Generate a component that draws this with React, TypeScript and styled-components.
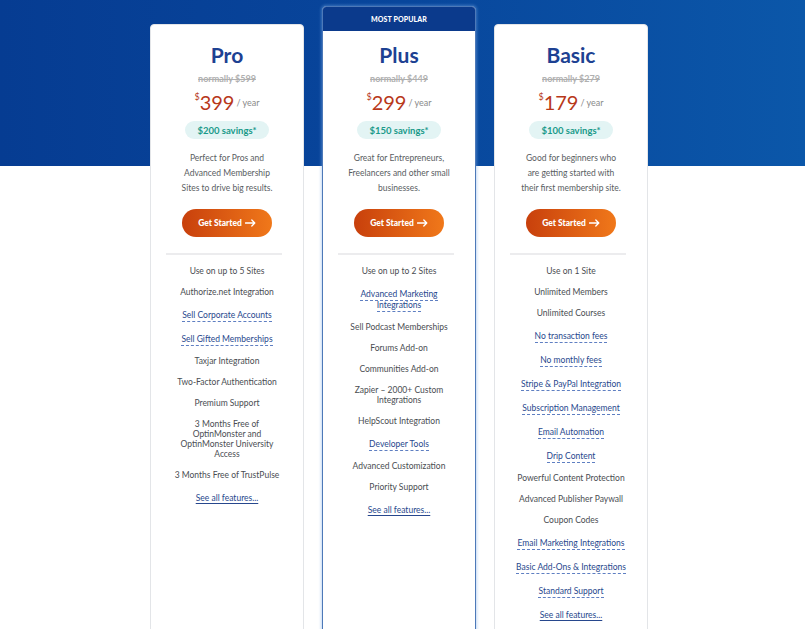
import React from "react";
import styled, { createGlobalStyle } from "styled-components";

const Global = createGlobalStyle`
  html, body { margin: 0; padding: 0; background: #ffffff; }
  body { font-family: Lato, "Noto Sans", "DejaVu Sans", sans-serif; }
  * { box-sizing: border-box; }
`;

const Page = styled.div`
  width: 805px;
  height: 629px;
  overflow: hidden;
  background: linear-gradient(90deg, #063c92 0%, #08469c 50%, #0b57a9 100%) top / 100% 166px no-repeat, #ffffff;
  padding: 6px 0 0 150px;
`;

const Row = styled.div`
  display: flex;
  align-items: stretch;
  gap: 18px;
`;

const Card = styled.div<{ $featured?: boolean }>`
  width: 154px;
  margin-top: ${(p) => (p.$featured ? "0" : "18px")};
  background: #ffffff;
  border-radius: 4px;
  border: 1px solid ${(p) => (p.$featured ? "#4d79b8" : "#e3e5e8")};
  box-shadow: ${(p) => (p.$featured ? "0 0 3px 1px rgba(120,170,230,0.45)" : "none")};
  overflow: hidden;
  display: flex;
  flex-direction: column;
  padding-bottom: 40px;
`;

const Banner = styled.div`
  height: 24px;
  background: #0b3a8c;
  color: #ffffff;
  font-size: 7px;
  font-weight: 900;
  letter-spacing: 0.1px;
  display: flex;
  align-items: center;
  justify-content: center;
`;

const Body = styled.div<{ $featured?: boolean }>`
  display: flex;
  flex-direction: column;
  align-items: center;
  padding-top: ${(p) => (p.$featured ? "12px" : "18px")};
`;

const Title = styled.div`
  font-size: 21px;
  line-height: 24px;
  font-weight: 700;
  color: #1d4192;
`;

const Normally = styled.div`
  margin-top: 6px;
  font-size: 9px;
  line-height: 12px;
  font-weight: 700;
  color: #b0b0b0;
  text-decoration: line-through;
`;

const Price = styled.div`
  margin-top: 6px;
  display: flex;
  align-items: flex-start;
  line-height: 22px;
  color: #b8381a;
`;

const Dollar = styled.span`
  font-size: 9px;
  line-height: 10px;
  margin-top: 1px;
`;

const Amount = styled.span`
  font-size: 20px;
  line-height: 22px;
`;

const Per = styled.span`
  font-size: 9px;
  line-height: 10px;
  margin-top: 7px;
  margin-left: 2px;
  color: #8a8a8a;
`;

const Savings = styled.div`
  margin-top: 8px;
  height: 18px;
  padding: 0 12px;
  border-radius: 9px;
  background: #e3f4f4;
  color: #1a9a8a;
  font-size: 9.5px;
  font-weight: 700;
  display: flex;
  align-items: center;
`;

const Desc = styled.div`
  margin-top: 12px;
  padding: 0 10px;
  font-size: 8.5px;
  line-height: 15px;
  color: #595d62;
  text-align: center;
`;

const Button = styled.button`
  margin-top: 13px;
  width: 90px;
  height: 28px;
  border: none;
  border-radius: 14px;
  background: linear-gradient(90deg, #c8400c 0%, #f0781a 100%);
  color: #ffffff;
  font-family: inherit;
  font-size: 8.5px;
  font-weight: 900;
  display: flex;
  align-items: center;
  justify-content: center;
  gap: 3px;
`;

const Divider = styled.div`
  margin-top: 16px;
  align-self: stretch;
  margin-left: 15px;
  margin-right: 21px;
  height: 2px;
  background: #ececee;
`;

const Features = styled.ul`
  list-style: none;
  margin: 11px 0 0;
  padding: 0 8px;
  display: flex;
  flex-direction: column;
  align-items: center;
  gap: 11px;
`;

const Feature = styled.li<{ $tip?: boolean }>`
  font-size: 8.5px;
  line-height: ${(p) => (p.$tip ? "11px" : "10px")};
  color: ${(p) => (p.$tip ? "#27478d" : "#4a4d52")};
  text-align: center;
  margin-top: ${(p) => (p.$tip ? "2px" : "0")};
`;

const Tip = styled.span`
  border-bottom: 1px dashed #5f7fc2;
  padding-bottom: 1px;
`;

const SeeAll = styled.a`
  font-size: 8.5px;
  line-height: 10px;
  color: #27478d;
  text-decoration: underline;
  text-decoration-style: solid;
  text-underline-offset: 2px;
  margin-top: 2px;
`;

type F = { t: string; tip?: boolean };

type Plan = {
  name: string;
  normally: string;
  price: string;
  savings: string;
  desc: string[];
  featured?: boolean;
  features: F[];
};

const plans: Plan[] = [
  {
    name: "Pro",
    normally: "normally $599",
    price: "399",
    savings: "$200 savings*",
    desc: ["Perfect for Pros and", "Advanced Membership", "Sites to drive big results."],
    features: [
      { t: "Use on up to 5 Sites" },
      { t: "Authorize.net Integration" },
      { t: "Sell Corporate Accounts", tip: true },
      { t: "Sell Gifted Memberships", tip: true },
      { t: "Taxjar Integration" },
      { t: "Two-Factor Authentication" },
      { t: "Premium Support" },
      { t: "3 Months Free of\nOptinMonster and\nOptinMonster University\nAccess" },
      { t: "3 Months Free of TrustPulse" },
    ],
  },
  {
    name: "Plus",
    normally: "normally $449",
    price: "299",
    savings: "$150 savings*",
    featured: true,
    desc: ["Great for Entrepreneurs,", "Freelancers and other small", "businesses."],
    features: [
      { t: "Use on up to 2 Sites" },
      { t: "Advanced Marketing\nIntegrations", tip: true },
      { t: "Sell Podcast Memberships" },
      { t: "Forums Add-on" },
      { t: "Communities Add-on" },
      { t: "Zapier – 2000+ Custom\nIntegrations" },
      { t: "HelpScout Integration" },
      { t: "Developer Tools", tip: true },
      { t: "Advanced Customization" },
      { t: "Priority Support" },
    ],
  },
  {
    name: "Basic",
    normally: "normally $279",
    price: "179",
    savings: "$100 savings*",
    desc: ["Good for beginners who", "are getting started with", "their first membership site."],
    features: [
      { t: "Use on 1 Site" },
      { t: "Unlimited Members" },
      { t: "Unlimited Courses" },
      { t: "No transaction fees", tip: true },
      { t: "No monthly fees", tip: true },
      { t: "Stripe & PayPal Integration", tip: true },
      { t: "Subscription Management", tip: true },
      { t: "Email Automation", tip: true },
      { t: "Drip Content", tip: true },
      { t: "Powerful Content Protection" },
      { t: "Advanced Publisher Paywall" },
      { t: "Coupon Codes" },
      { t: "Email Marketing Integrations", tip: true },
      { t: "Basic Add-Ons & Integrations", tip: true },
      { t: "Standard Support", tip: true },
    ],
  },
];

const Arrow = () => (
  <svg width="11" height="8" viewBox="0 0 11 8" fill="none">
    <path d="M0.5 4H9.8M6.8 1L9.8 4L6.8 7" stroke="#fff" strokeWidth="1.3" strokeLinecap="round" strokeLinejoin="round" />
  </svg>
);

const renderLines = (t: string, tip?: boolean) =>
  t.split("\n").map((line, i) => (
    <React.Fragment key={i}>
      {i > 0 && <br />}
      {tip ? <Tip>{line}</Tip> : line}
    </React.Fragment>
  ));

export default function App() {
  return (
    <>
      <Global />
      <Page>
        <Row>
          {plans.map((p) => (
            <Card key={p.name} $featured={p.featured}>
              {p.featured && <Banner>MOST POPULAR</Banner>}
              <Body $featured={p.featured}>
                <Title>{p.name}</Title>
                <Normally>{p.normally}</Normally>
                <Price>
                  <Dollar>$</Dollar>
                  <Amount>{p.price}</Amount>
                  <Per>/ year</Per>
                </Price>
                <Savings>{p.savings}</Savings>
                <Desc>
                  {p.desc.map((d, i) => (
                    <div key={i}>{d}</div>
                  ))}
                </Desc>
                <Button>
                  Get Started <Arrow />
                </Button>
                <Divider />
                <Features>
                  {p.features.map((f, i) => (
                    <Feature key={i} $tip={f.tip}>
                      {renderLines(f.t, f.tip)}
                    </Feature>
                  ))}
                  <SeeAll href="#">See all features...</SeeAll>
                </Features>
              </Body>
            </Card>
          ))}
        </Row>
      </Page>
    </>
  );
}
